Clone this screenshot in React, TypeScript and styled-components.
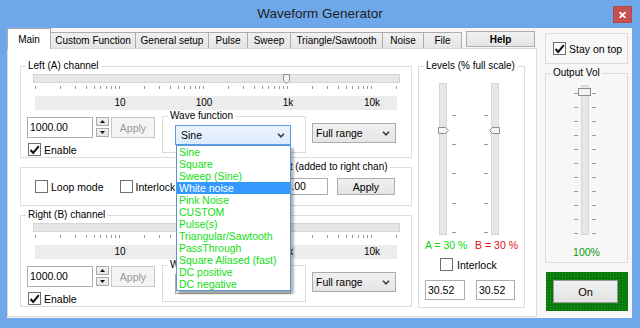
import styled, { createGlobalStyle } from 'styled-components'

/* Global */
const GlobalStyle = createGlobalStyle`
  html, body { margin: 0; padding: 0; background: #6ea8ea; }
  body { font-family: 'Liberation Sans', Arial, sans-serif; font-size: 10px; color: #000; }
  * { box-sizing: border-box; }
`

/* Data */
const TABS: [string, number][] = [
  ['Main', 44], ['Custom Function', 86], ['General setup', 74], ['Pulse', 40],
  ['Sweep', 44], ['Triangle/Sawtooth', 93], ['Noise', 42], ['File', 39],
]

const WAVES = [
  'Sine', 'Square', 'Sweep (Sine)', 'White noise', 'Pink Noise', 'CUSTOM', 'Pulse(s)',
  'Triangular/Sawtooth', 'PassThrough', 'Square Aliased (fast)', 'DC positive', 'DC negative',
]

const DECADE = 84 // px per decade on the frequency slider
const freqToX = (f: number) => 3 + DECADE * Math.log10(f)

const FREQ_TICKS = [1, 10, 100, 1000].flatMap(d => [1, 2, 3, 4, 5, 6, 7, 8, 9].map(n => n * d)).concat([10000, 20000])
const FREQ_LABELS: [number, string][] = [[10, '10'], [100, '100'], [1000, '1k'], [10000, '10k']]

/* Window frame */
const Window = styled.div`
  width: 640px;
  height: 328px;
  background: #6ea8ea;
  display: flex;
  flex-direction: column;
  overflow: hidden;
`

const TitleBar = styled.div`
  height: 28px;
  display: grid;
  grid-template-columns: 1fr auto 1fr;
  align-items: start;
`

const Title = styled.div`
  grid-column: 2;
  padding-top: 6px;
  font-size: 13.5px;
  line-height: 16px;
  color: #1e1e1e;
`

const CloseButton = styled.div`
  grid-column: 3;
  justify-self: end;
  margin: 6px 8px 0 0;
  width: 19px;
  height: 17px;
  background: #c75050;
  border: 1px solid #b84545;
  display: flex;
  align-items: center;
  justify-content: center;
`

const Client = styled.div`
  flex: 1;
  margin: 0 8px 10px 7px;
  background: #f7f7f7;
  display: flex;
  gap: 8px;
`

/* Tabs */
const TabArea = styled.div`
  width: 530px;
  display: flex;
  flex-direction: column;
  padding-bottom: 1px;
`

const TabStrip = styled.div`
  height: 20px;
  display: flex;
  align-items: flex-end;
`

const Tab = styled.div<{ $w: number; $active?: boolean }>`
  width: ${p => p.$w}px;
  height: ${p => (p.$active ? 21 : 16)}px;
  margin-bottom: ${p => (p.$active ? -1 : 0)}px;
  border: 1px solid #acacac;
  border-bottom: none;
  background: ${p => (p.$active ? '#fff' : 'linear-gradient(#f0f0f0, #e5e5e5)')};
  display: flex;
  align-items: center;
  justify-content: center;
  white-space: nowrap;
  position: relative;
  z-index: ${p => (p.$active ? 2 : 1)};
  &:not(:first-child) { margin-left: -1px; }
`

const HelpButton = styled.div`
  margin: 0 0 1px 4px;
  width: 69px;
  height: 16px;
  border: 1px solid #acacac;
  background: linear-gradient(#f0f0f0, #e5e5e5);
  font-weight: bold;
  display: flex;
  align-items: center;
  justify-content: center;
`

const Panel = styled.div`
  flex: 1;
  background: #fff;
  border: 1px solid #d9d9d9;
  padding: 17px 0 0 12px;
  display: flex;
  gap: 6px;
`

const Column = styled.div`
  width: 392px;
  display: flex;
  flex-direction: column;
  gap: 9px;
`

/* Group boxes */
const GroupBox = styled.div<{ $h: number; $w?: number }>`
  position: relative;
  height: ${p => p.$h}px;
  width: ${p => (p.$w ? `${p.$w}px` : 'auto')};
  border: 1px solid #dcdcdc;
`

const Caption = styled.span<{ $at?: number; $bg?: string }>`
  position: absolute;
  top: -7px;
  left: ${p => p.$at ?? 5}px;
  padding: 0 2px;
  line-height: 12px;
  white-space: nowrap;
  background: ${p => p.$bg ?? '#fff'};
`

/* Horizontal frequency slider */
const SliderBlock = styled.div`
  margin: 7px 0 0 12px;
  width: 367px;
`

const HTrack = styled.div`
  position: relative;
  height: 9px;
  border: 1px solid #d6d6d6;
  background: #e6e6e6;
`

const HThumb = styled.svg`
  position: absolute;
  top: -1px;
`

const TickRow = styled.div`
  position: relative;
  height: 4px;
  margin-top: 3px;
`

const HTick = styled.div`
  position: absolute;
  top: 0;
  width: 1px;
  height: 3px;
  background: #9a9a9a;
`

const ScaleBand = styled.div`
  position: relative;
  margin: 6px 0 0 2px;
  width: 362px;
  height: 14px;
  background: #ececec;
`

const ScaleLabel = styled.span`
  position: absolute;
  top: 1px;
  line-height: 12px;
  transform: translateX(-50%);
`

/* Controls */
const ControlsRow = styled.div`
  display: flex;
  align-items: flex-start;
  margin: 6px 0 0 6px;
`

const LeftStack = styled.div`
  display: flex;
  flex-direction: column;
  padding-top: 1px;
`

const InputRow = styled.div`
  display: flex;
`

const TextField = styled.div<{ $w: number; $h: number; $ml?: string }>`
  width: ${p => p.$w}px;
  height: ${p => p.$h}px;
  margin-left: ${p => p.$ml ?? '0'};
  border: 1px solid #abadb3;
  background: #fff;
  padding-left: 2px;
  line-height: ${p => p.$h - 2}px;
  font-size: 10.5px;
`

const Spin = styled.div`
  margin-left: 3px;
  width: 13px;
  display: flex;
  flex-direction: column;
  gap: 2px;
`

const SpinButton = styled.div`
  height: 9px;
  border: 1px solid #acacac;
  background: linear-gradient(#f0f0f0, #e5e5e5);
  display: flex;
  align-items: center;
  justify-content: center;
`

const PushButton = styled.div<{ $w: number; $h: number; $ml: number; $disabled?: boolean }>`
  width: ${p => p.$w}px;
  height: ${p => p.$h}px;
  margin-left: ${p => p.$ml}px;
  border: 1px solid ${p => (p.$disabled ? '#c8c8c8' : '#acacac')};
  background: ${p => (p.$disabled ? '#f4f4f4' : 'linear-gradient(#f0f0f0, #e5e5e5)')};
  color: ${p => (p.$disabled ? '#9a9a9a' : '#000')};
  font-size: 10.5px;
  display: flex;
  align-items: center;
  justify-content: center;
`

const CheckRow = styled.div<{ $mt?: number; $ml?: number }>`
  display: flex;
  align-items: center;
  gap: 3px;
  margin-top: ${p => p.$mt ?? 0}px;
  margin-left: ${p => p.$ml ?? 0}px;
  white-space: nowrap;
  font-size: 10.5px;
`

const Box = styled.div`
  width: 13px;
  height: 13px;
  border: 1px solid #707070;
  background: #fff;
  display: flex;
  align-items: center;
  justify-content: center;
`

const WaveBox = styled(GroupBox)`
  margin-left: 7px;
`

const ComboWrap = styled.div`
  position: relative;
  margin: 8px 0 0 12px;
  width: 116px;
`

const Combo = styled.div<{ $w: number; $open?: boolean; $ml?: number; $mt?: number }>`
  width: ${p => p.$w}px;
  height: 20px;
  margin-left: ${p => p.$ml ?? 0}px;
  margin-top: ${p => p.$mt ?? 0}px;
  border: 1px solid ${p => (p.$open ? '#569de5' : '#acacac')};
  background: ${p => (p.$open ? 'linear-gradient(#ecf4fc, #dcecfc)' : 'linear-gradient(#f0f0f0, #e5e5e5)')};
  padding: 0 5px 0 ${p => (p.$open ? 5 : 3)}px;
  display: flex;
  align-items: center;
  justify-content: space-between;
  font-size: 10.5px;
`

const DropList = styled.div`
  position: absolute;
  top: 100%;
  left: 1px;
  width: 115px;
  border: 1px solid #5a95d6;
  background: #fff;
  box-shadow: 3px 3px 2px rgba(0, 0, 0, 0.28);
  z-index: 10;
`

const DropItem = styled.div<{ $selected?: boolean }>`
  height: 12px;
  line-height: 12px;
  padding-left: 2px;
  font-size: 10.5px;
  white-space: nowrap;
  color: ${p => (p.$selected ? '#fff' : '#10e010')};
  background: ${p => (p.$selected ? '#3399ff' : 'transparent')};
`

const MidRow = styled.div`
  display: flex;
  align-items: center;
  height: 100%;
  padding: 0 16px 0 14px;
`

/* Vertical sliders */
const LevelSliders = styled.div`
  display: flex;
  gap: 44px;
  margin-top: 16px;
  padding-left: 20px;
`

const VTrack = styled.div<{ $h: number }>`
  position: relative;
  width: 8px;
  height: ${p => p.$h}px;
  border: 1px solid #d6d6d6;
  background: #e6e6e6;
`

const VTick = styled.div`
  position: absolute;
  width: 4px;
  height: 1px;
  background: #9a9a9a;
`

const VThumb = styled.svg`
  position: absolute;
`

const Readouts = styled.div`
  display: flex;
  justify-content: space-between;
  margin-top: 4px;
  padding: 0 6px;
  line-height: 12px;
  font-size: 10.5px;
`

const Readout = styled.span<{ $color: string }>`
  color: ${p => p.$color};
`

const LevelFields = styled.div`
  display: flex;
  gap: 11px;
  margin-top: 9px;
  padding-left: 6px;
`

/* Side column */
const Side = styled.div`
  width: 83px;
  display: flex;
  flex-direction: column;
`

const StayBox = styled.div`
  margin-top: 5px;
  height: 31px;
  border: 1px solid #dcdcdc;
  display: flex;
  align-items: center;
  padding-left: 7px;
`

const VolGroup = styled(GroupBox)`
  margin-top: 9px;
`

const VolSlider = styled.div`
  margin: 11px 0 0 35px;
`

const VolPercent = styled.div`
  margin-top: 11px;
  text-align: center;
  line-height: 12px;
  font-size: 10.5px;
  color: #0a960a;
`

const OnFrame = styled.div`
  margin: 9px 0 0 1px;
  width: 82px;
  height: 39px;
  padding: 8px 10px 8px 7px;
  background-color: #087808;
  background-image: radial-gradient(circle, #2a9a2a 0.6px, transparent 0.9px);
  background-size: 3px 3px;
`

const OnButton = styled.div`
  width: 65px;
  height: 23px;
  border: 1px solid #9a9a9a;
  background: linear-gradient(#f2f2f2, #e2e2e2);
  font-size: 11px;
  display: flex;
  align-items: center;
  justify-content: center;
`

/* Small drawings */
const Chevron = () => (
  <svg width="8" height="5" viewBox="0 0 8 5">
    <path d="M1 0.8 L4 3.8 L7 0.8" fill="none" stroke="#3c3c3c" strokeWidth="1.6" />
  </svg>
)

const Arrow = ({ up }: { up?: boolean }) => (
  <svg width="5" height="3" viewBox="0 0 5 3">
    <path d={up ? 'M0 3 L2.5 0 L5 3 Z' : 'M0 0 L2.5 3 L5 0 Z'} fill="#111" />
  </svg>
)

const CheckBox = ({ checked }: { checked?: boolean }) => (
  <Box>
    {checked && (
      <svg width="11" height="10" viewBox="0 0 11 10">
        <path d="M1.5 5 L4.2 8 L9.8 1.2" fill="none" stroke="#111" strokeWidth="2" />
      </svg>
    )}
  </Box>
)

const Slider = ({ value }: { value: number }) => (
  <SliderBlock>
    <HTrack>
      <HThumb width="7" height="10" viewBox="0 0 7 10" style={{ left: freqToX(value) - 6 }}>
        <path d="M0.5 0.5 H6.5 V6.5 L3.5 9.5 L0.5 6.5 Z" fill="#f3f3f3" stroke="#8e8e8e" />
      </HThumb>
    </HTrack>
    <TickRow>
      {FREQ_TICKS.map(f => <HTick key={f} style={{ left: Math.round(freqToX(f) - 1) }} />)}
    </TickRow>
    <ScaleBand>
      {FREQ_LABELS.map(([f, t]) => <ScaleLabel key={t} style={{ left: freqToX(f) - 2 }}>{t}</ScaleLabel>)}
    </ScaleBand>
  </SliderBlock>
)

const Channel = ({ title, open }: { title: string; open?: boolean }) => (
  <GroupBox $h={92}>
    <Caption>{title}</Caption>
    <Slider value={1000} />
    <ControlsRow>
      <LeftStack>
        <InputRow>
          <TextField $w={66} $h={21}>1000.00</TextField>
          <Spin>
            <SpinButton><Arrow up /></SpinButton>
            <SpinButton><Arrow /></SpinButton>
          </Spin>
          <PushButton $w={44} $h={21} $ml={2} $disabled>Apply</PushButton>
        </InputRow>
        <CheckRow $mt={5} $ml={1}><CheckBox checked /><span>Enable</span></CheckRow>
      </LeftStack>
      <WaveBox $h={37} $w={144}>
        <Caption>Wave function</Caption>
        <ComboWrap>
          <Combo $w={116} $open={open}><span>Sine</span><Chevron /></Combo>
          {open && (
            <DropList>
              {WAVES.map(w => <DropItem key={w} $selected={w === 'White noise'}>{w}</DropItem>)}
            </DropList>
          )}
        </ComboWrap>
      </WaveBox>
      <Combo $w={84} $ml={6} $mt={7}><span>Full range</span><Chevron /></Combo>
    </ControlsRow>
  </GroupBox>
)

const LevelSlider = ({ value, side }: { value: number; side: 'left' | 'right' }) => (
  <VTrack $h={152}>
    {[31, 60, 89, 119, 148].map(t => (
      <VTick key={t} style={side === 'right' ? { top: t, left: 12 } : { top: t, left: -8 }} />
    ))}
    <VThumb width="11" height="7" viewBox="0 0 11 7"
      style={{ top: Math.round(value * 1.45) - 1, left: side === 'right' ? -2 : -3 }}>
      <path d={side === 'right' ? 'M0.5 0.5 H7.5 L10.5 3.5 L7.5 6.5 H0.5 Z' : 'M10.5 0.5 H3.5 L0.5 3.5 L3.5 6.5 H10.5 Z'}
        fill="#f3f3f3" stroke="#8e8e8e" />
    </VThumb>
  </VTrack>
)

export default function App() {
  return (
    <Window>
      <GlobalStyle />
      <TitleBar>
        <Title>Waveform Generator</Title>
        <CloseButton>
          <svg width="7" height="6" viewBox="0 0 7 6">
            <path d="M0.5 0 L6.5 6 M6.5 0 L0.5 6" stroke="#fff" strokeWidth="1.8" />
          </svg>
        </CloseButton>
      </TitleBar>

      <Client>
        <TabArea>
          <TabStrip>
            {TABS.map(([t, w], i) => <Tab key={t} $w={w} $active={i === 0}>{t}</Tab>)}
            <HelpButton>Help</HelpButton>
          </TabStrip>

          <Panel>
            <Column>
              <Channel title="Left (A) channel" open />

              <GroupBox $h={39}>
                <Caption $at={243}>Offset (added to right chan)</Caption>
                <MidRow>
                  <CheckRow><CheckBox /><span>Loop mode</span></CheckRow>
                  <CheckRow $ml={16}><CheckBox /><span>Interlock</span></CheckRow>
                  <TextField $w={63} $h={17} $ml="auto">1000.00</TextField>
                  <PushButton $w={58} $h={17} $ml={9}>Apply</PushButton>
                </MidRow>
              </GroupBox>

              <Channel title="Right (B) channel" />
            </Column>

            <GroupBox $h={242} $w={107}>
              <Caption>Levels (% full scale)</Caption>
              <LevelSliders>
                <LevelSlider value={30} side="right" />
                <LevelSlider value={30} side="left" />
              </LevelSliders>
              <Readouts>
                <Readout $color="#10d810">A = 30 %</Readout>
                <Readout $color="#e01010">B = 30 %</Readout>
              </Readouts>
              <CheckRow $mt={7} $ml={21} style={{ gap: 4 }}><CheckBox /><span>Interlock</span></CheckRow>
              <LevelFields>
                <TextField $w={40} $h={20}>30.52</TextField>
                <TextField $w={39} $h={20}>30.52</TextField>
              </LevelFields>
            </GroupBox>
          </Panel>
        </TabArea>

        <Side>
          <StayBox>
            <CheckRow><CheckBox checked /><span>Stay on top</span></CheckRow>
          </StayBox>

          <VolGroup $h={190}>
            <Caption $bg="#f7f7f7">Output Vol</Caption>
            <VolSlider>
              <VTrack $h={150}>
                {Array.from({ length: 11 }, (_, k) => 7 + 14 * k).map(t => (
                  <span key={t}>
                    <VTick style={{ top: t, left: -8 }} />
                    <VTick style={{ top: t, left: 10 }} />
                  </span>
                ))}
                <VThumb width="13" height="8" viewBox="0 0 13 8" style={{ top: 2, left: -4 }}>
                  <rect x="0.5" y="0.5" width="12" height="7" fill="#f3f3f3" stroke="#8e8e8e" />
                </VThumb>
              </VTrack>
            </VolSlider>
            <VolPercent>100%</VolPercent>
          </VolGroup>

          <OnFrame>
            <OnButton>On</OnButton>
          </OnFrame>
        </Side>
      </Client>
    </Window>
  )
}
